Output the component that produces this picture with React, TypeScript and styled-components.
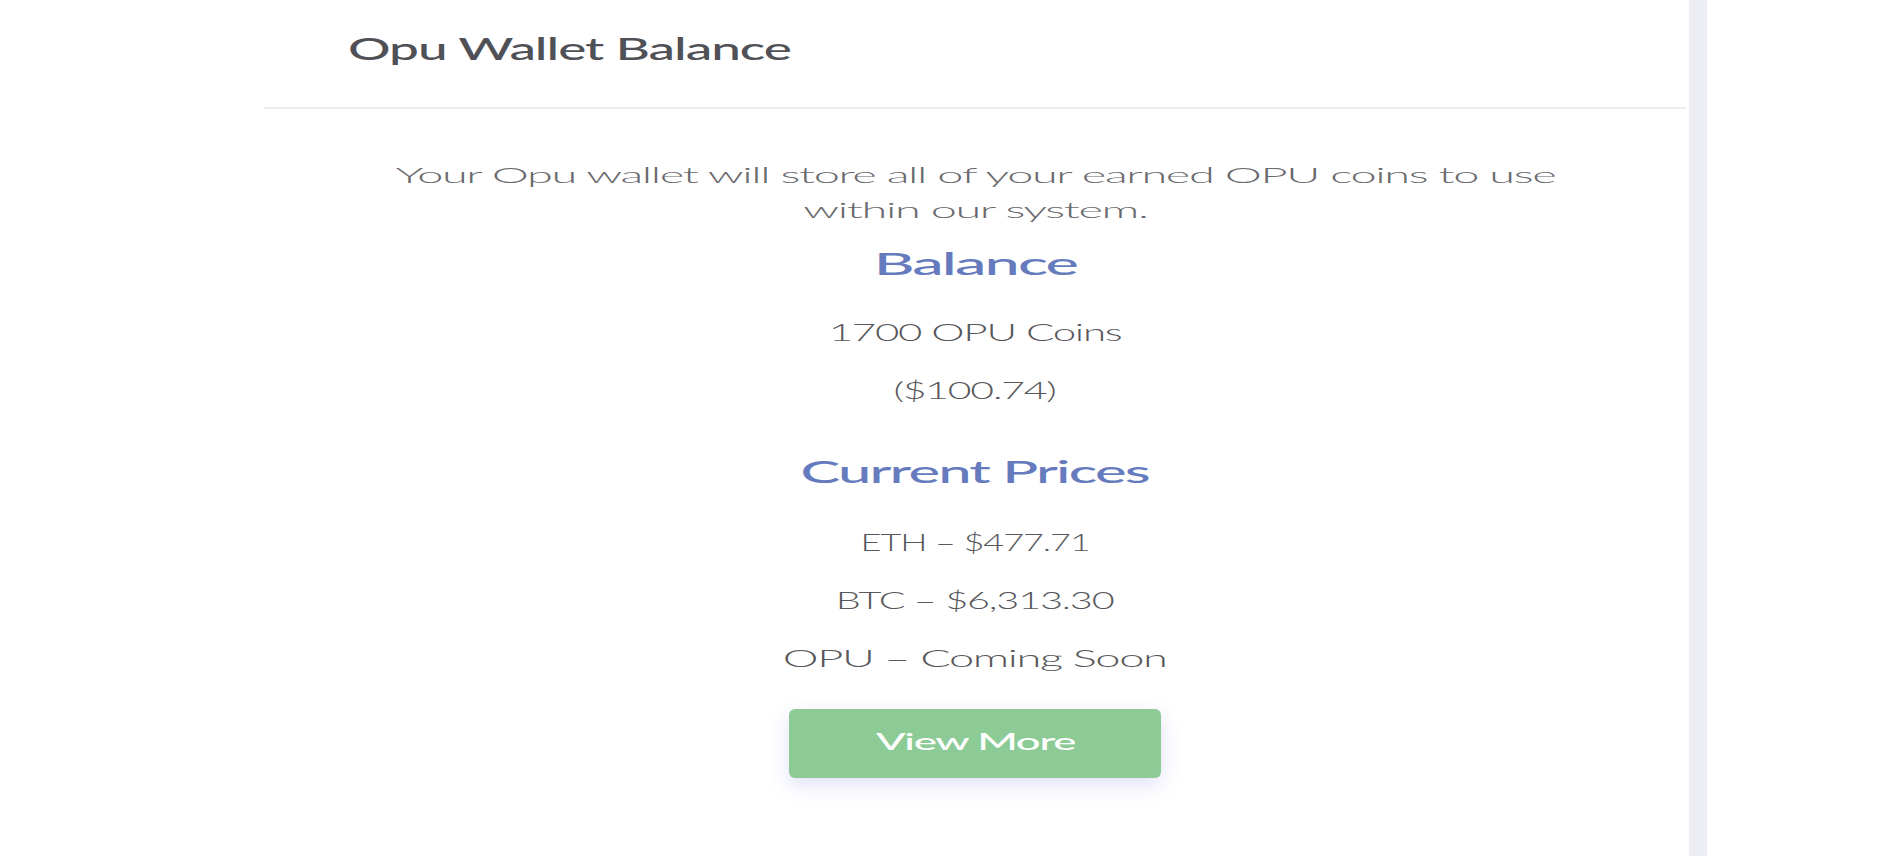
import React, { useLayoutEffect, useRef, useState } from "react";
import styled, { createGlobalStyle } from "styled-components";

const GlobalStyle = createGlobalStyle`
  html, body {
    margin: 0;
    padding: 0;
    background: #ffffff;
    font-family: "Lato", "Liberation Sans", sans-serif;
  }
  * { box-sizing: border-box; }
`;

/* Measures the ink width of the first line of text at run time and
   returns the horizontal stretch needed to reach the target width. */
function useStretch(target: number, text: string) {
  const ref = useRef<HTMLElement | null>(null);
  const [sx, setSx] = useState(1);
  useLayoutEffect(() => {
    const measure = () => {
      const el = ref.current;
      if (!el) return;
      const cs = getComputedStyle(el);
      const ctx = document.createElement("canvas").getContext("2d") as
        | (CanvasRenderingContext2D & { letterSpacing?: string })
        | null;
      if (!ctx) return;
      ctx.font = `${cs.fontStyle} ${cs.fontWeight} ${cs.fontSize} ${cs.fontFamily}`;
      if (cs.letterSpacing && cs.letterSpacing !== "normal") ctx.letterSpacing = cs.letterSpacing;
      const m = ctx.measureText(text);
      const ink = m.actualBoundingBoxLeft + m.actualBoundingBoxRight;
      if (ink > 0) setSx(target / ink);
    };
    measure();
    if (document.fonts && document.fonts.ready) document.fonts.ready.then(measure);
  }, [target, text]);
  return { ref, sx };
}

const Page = styled.div`
  display: flex;
  height: 856px;
  padding-left: 264px;
  overflow: hidden;
`;

const Card = styled.section`
  width: 1422px;
  display: flex;
  flex-direction: column;
  background: #ffffff;
`;

const Strip = styled.div`
  width: 18px;
  margin-left: 3px;
  background: #ededf4;
  flex-shrink: 0;
`;

const Header = styled.header`
  height: 109px;
  padding: 30px 0 0 84px;
  border-bottom: 2px solid #ebebf1;
`;

const TitleText = styled.h1`
  display: inline-block;
  margin: 0;
  font-family: "Lato", "Liberation Sans", sans-serif;
  font-size: 31px;
  line-height: 37px;
  font-weight: 500;
  letter-spacing: -0.02em;
  color: #505157;
  white-space: nowrap;
  transform-origin: 0 50%;
`;

const Body = styled.div`
  display: flex;
  flex-direction: column;
  align-items: center;
  padding-top: 48px;
`;

const Intro = styled.p`
  display: inline-block;
  margin: 0;
  font-size: 21px;
  line-height: 35px;
  font-weight: 300;
  letter-spacing: -0.03em;
  color: #6a6a6e;
  text-align: center;
  white-space: nowrap;
  transform-origin: 50% 50%;
`;

const Heading = styled.h2<{ $top: number }>`
  display: inline-block;
  margin: ${(p) => p.$top}px 0 0;
  font-size: 30px;
  line-height: 36px;
  font-weight: 500;
  letter-spacing: -0.03em;
  color: #667bbe;
  white-space: nowrap;
  transform-origin: 50% 50%;
`;

const Value = styled.div<{ $top: number }>`
  display: inline-block;
  margin-top: ${(p) => p.$top}px;
  font-size: 23px;
  line-height: 30px;
  font-weight: 300;
  letter-spacing: -0.03em;
  color: #58585c;
  white-space: nowrap;
  transform-origin: 50% 50%;
`;

const Button = styled.button`
  margin-top: 36px;
  width: 372px;
  height: 69px;
  border: none;
  border-radius: 6px;
  background: #8ccb96;
  box-shadow: 0 7px 20px rgba(104, 100, 224, 0.2);
  display: flex;
  align-items: center;
  justify-content: center;
  padding: 0 0 5px;
  cursor: pointer;
`;

const ButtonLabel = styled.span`
  display: inline-block;
  font-family: "Lato", "Liberation Sans", sans-serif;
  font-size: 23px;
  line-height: 28px;
  font-weight: 500;
  letter-spacing: -0.03em;
  color: #ffffff;
  white-space: nowrap;
  transform-origin: 50% 50%;
`;

function Title({ children, target }: { children: string; target: number }) {
  const { ref, sx } = useStretch(target, children);
  return (
    <TitleText ref={ref as React.Ref<HTMLHeadingElement>} style={{ transform: `scaleX(${sx})` }}>
      {children}
    </TitleText>
  );
}

function SectionHeading({ children, target, top }: { children: string; target: number; top: number }) {
  const { ref, sx } = useStretch(target, children);
  return (
    <Heading $top={top} ref={ref as React.Ref<HTMLHeadingElement>} style={{ transform: `scaleX(${sx})` }}>
      {children}
    </Heading>
  );
}

function ValueLine({ children, target, top }: { children: string; target: number; top: number }) {
  const { ref, sx } = useStretch(target, children);
  return (
    <Value $top={top} ref={ref as React.Ref<HTMLDivElement>} style={{ transform: `scaleX(${sx})` }}>
      {children}
    </Value>
  );
}

function IntroText({ first, second, target }: { first: string; second: string; target: number }) {
  const { ref, sx } = useStretch(target, first);
  return (
    <Intro ref={ref as React.Ref<HTMLParagraphElement>} style={{ transform: `scaleX(${sx})` }}>
      {first}
      <br />
      {second}
    </Intro>
  );
}

function ViewMore({ target }: { target: number }) {
  const label = "View More";
  const { ref, sx } = useStretch(target, label);
  return (
    <Button type="button">
      <ButtonLabel ref={ref as React.Ref<HTMLSpanElement>} style={{ transform: `scaleX(${sx})` }}>
        {label}
      </ButtonLabel>
    </Button>
  );
}

export default function App() {
  return (
    <>
      <GlobalStyle />
      <Page>
        <Card>
          <Header>
            <Title target={442}>Opu Wallet Balance</Title>
          </Header>
          <Body>
            <IntroText
              target={1165}
              first="Your Opu wallet will store all of your earned OPU coins to use"
              second="within our system."
            />
            <SectionHeading target={199} top={18}>Balance</SectionHeading>
            <ValueLine target={289} top={36}>1700 OPU Coins</ValueLine>
            <ValueLine target={160} top={28}>($100.74)</ValueLine>
            <SectionHeading target={346} top={48}>Current Prices</SectionHeading>
            <ValueLine target={225} top={38}>ETH – $477.71</ValueLine>
            <ValueLine target={275} top={28}>BTC – $6,313.30</ValueLine>
            <ValueLine target={380} top={28}>OPU – Coming Soon</ValueLine>
            <ViewMore target={201} />
          </Body>
        </Card>
        <Strip />
      </Page>
    </>
  );
}
